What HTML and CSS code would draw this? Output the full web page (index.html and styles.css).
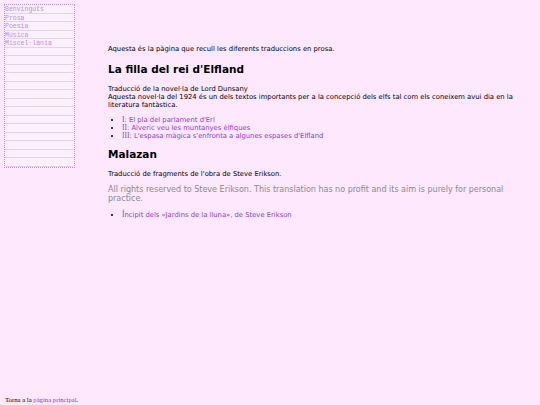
FILE: index.html
```html
<!DOCTYPE html>
<html>
<head>
<meta charset="utf-8">
<link rel="stylesheet" href="styles.css">
</head>
<body>
<div class="page">
  <nav class="sidebar">
    <ul class="menu">
      <li><a href="#">Benvinguts</a></li>
      <li><a href="#">Prosa</a></li>
      <li><a href="#">Poesia</a></li>
      <li><a href="#">Música</a></li>
      <li><a href="#">Miscel·lània</a></li>
      <li></li><li></li><li></li><li></li><li></li><li></li><li></li>
      <li></li><li></li><li></li><li></li><li></li><li></li><li></li>
    </ul>
  </nav>
  <main class="content">
    <p class="intro">Aquesta és la pàgina que recull les diferents traduccions en prosa.</p>
    <h2>La filla del rei d'Elfland</h2>
    <p class="desc">Traducció de la novel·la de Lord Dunsany<br>Aquesta novel·la del 1924 és un dels textos importants per a la concepció dels elfs tal com els coneixem avui dia en la literatura fantàstica.</p>
    <ul class="links">
      <li><a href="#"><span class="num">I</span>: El pla del parlament d'Erl</a></li>
      <li><a href="#"><span class="num">II</span>: Alveric veu les muntanyes èlfiques</a></li>
      <li><a href="#"><span class="num">III</span>: L'espasa màgica s'enfronta a algunes espases d'Elfland</a></li>
    </ul>
    <h2>Malazan</h2>
    <p>Traducció de fragments de l'obra de Steve Erikson.</p>
    <p class="rights">All rights reserved to Steve Erikson. This translation has no profit and its aim is purely for personal practice.</p>
    <ul class="links">
      <li><a href="#"><span class="num">Í</span>ncipit dels «Jardins de la lluna», de Steve Erikson</a></li>
    </ul>
  </main>
</div>
<footer class="footer">Torna a la <a href="#">pàgina principal</a>.</footer>
</body>
</html>
```
FILE: styles.css
```css
html, body { margin: 0; padding: 0; }
body {
  background: #fde8fd;
  min-height: 405px;
  display: flex;
  flex-direction: column;
  font-family: "DejaVu Sans", Verdana, sans-serif;
  color: #000;
}
.page { display: flex; align-items: flex-start; }
.sidebar {
  margin: 4px 0 0 4px;
  width: 69px;
  border: 1px dotted #c48ce0;
  background: #fdf0fd;
}
.menu { list-style: none; margin: 0; padding: 0; }
.menu li {
  height: 7.5px;
  border-bottom: 1px solid #ddd6ea;
  font-family: "Liberation Mono", monospace;
  font-size: 6.5px;
  line-height: 9px;
  overflow: hidden;
}
.menu a { color: #c48ce0; text-decoration: none; }
.content {
  margin-left: 33px;
  padding-top: 45px;
  font-size: 6.8px;
  width: 420px;
}
.content p { margin: 0 0 7px; line-height: 8px; }
.content .intro { margin-bottom: 10px; }
.content .desc { margin-bottom: 7px; }
h2 { font-size: 10.5px; margin: 0 0 10px; font-weight: bold; }
.links { margin: 0 0 8px; padding-left: 14px; }
.links li { line-height: 8px; }
.links a { color: #8a3ccc; text-decoration: none; }
.num { font-family: "Liberation Serif", serif; font-size: 7.5px; }
.content .rights { color: #8a8a8a; font-size: 8px; line-height: 9px; margin-bottom: 8px; }
.footer {
  margin-top: auto;
  padding: 0 0 1px 5px;
  font-family: "Liberation Serif", serif;
  font-size: 6.7px;
  line-height: 8px;
}
.footer a { color: #8a3ccc; text-decoration: none; }
```
